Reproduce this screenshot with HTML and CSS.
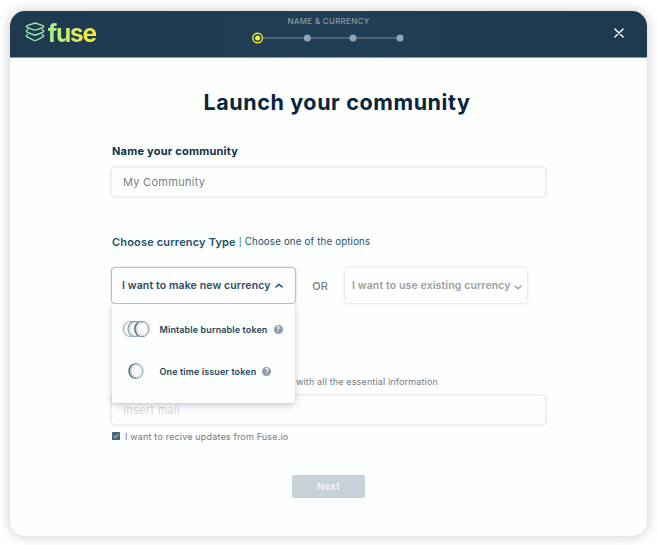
FILE: index.html
```html
<!DOCTYPE html>
<html lang="en">
<head>
<meta charset="utf-8">
<title>Launch your community</title>
<link rel="stylesheet" href="styles.css">
</head>
<body>
<main class="modal">
  <header class="header">
    <div class="logo">
      <svg class="logo-mark" width="20" height="20" viewBox="0 0 20 20" fill="none" stroke="url(#mark)" stroke-width="1.4" stroke-linejoin="round" stroke-linecap="round">
        <defs><linearGradient id="mark" gradientUnits="userSpaceOnUse" x1="0" y1="20" x2="20" y2="0"><stop offset="0" stop-color="#7be3b4"/><stop offset="1" stop-color="#a4ee9a"/></linearGradient></defs>
        <path d="M10 1 L17.9 3.7 Q19.6 4.6 17.9 5.5 L12.2 7.6 Q10 8.4 7.8 7.6 L2.1 5.5 Q.4 4.6 2.1 3.7 Z"/>
        <path d="M2.8 7.8 L2.1 8.2 Q.4 9.2 2.1 10.1 L7.8 12.5 Q10 13.4 12.2 12.5 L17.9 10.1 Q19.6 9.2 17.9 8.2 L17.2 7.8"/>
        <path d="M2.8 12.6 L2.1 13 Q.4 14 2.1 14.9 L7.8 17.8 Q10 19.4 12.2 17.8 L17.9 14.9 Q19.6 14 17.9 13 L17.2 12.6"/>
      </svg>
      <span class="logo-text">fuse</span>
    </div>
    <div class="progress">
      <div class="progress-label">NAME &amp; CURRENCY</div>
      <svg width="154" height="12" viewBox="0 0 154 12">
        <path d="M11 6H148" stroke="#566f83" stroke-width="1.6"/>
        <circle cx="5.6" cy="6" r="4.8" fill="none" stroke="#e9e432" stroke-width="1.4"/>
        <circle cx="5.6" cy="6" r="2.5" fill="#f6ee2e"/>
        <circle cx="55.3" cy="6" r="3.5" fill="#94a3b0"/>
        <circle cx="101" cy="6" r="3.5" fill="#94a3b0"/>
        <circle cx="148" cy="6" r="3.5" fill="#94a3b0"/>
      </svg>
    </div>
    <svg class="close" width="10" height="10" viewBox="0 0 10 10" stroke="#fff" stroke-width="1.4" stroke-linecap="round"><path d="M.9.9 9.1 9.1M9.1.9.9 9.1"/></svg>
  </header>
  <form class="form">
    <h1 class="title">Launch your community</h1>
    <div class="label name-label">Name your community</div>
    <div class="input name-input">My Community</div>
    <div class="label type-label"><span class="t-choose">Choose currency Type</span><span class="t-options"><span class="bar">|</span> Choose one of the options</span></div>
    <div class="choices">
      <div class="select active">
        <span>I want to make new currency</span>
        <svg width="8" height="5" viewBox="0 0 8 5" fill="none" stroke="#2c4b62" stroke-width="1.4" stroke-linecap="round"><path d="M.8 4 Q2.2 3 4 1.2 Q5.8 3 7.2 4"/></svg>
        <div class="menu">
          <div class="option">
            <svg class="coins" width="28" height="18" viewBox="0 0 28 18" fill="none">
              <ellipse cx="8" cy="9" rx="7" ry="7.6" stroke="#a3b8c6"/>
              <ellipse cx="9" cy="9" rx="6.5" ry="7.2" stroke="#b9c8d2" stroke-width=".8"/>
              <ellipse cx="13" cy="9" rx="7" ry="7.6" fill="#fff" stroke="#7f9bac" stroke-width="1.2"/>
              <ellipse cx="14.3" cy="9" rx="6.7" ry="7.4" stroke="#a8bbc7" stroke-width=".8"/>
              <ellipse cx="19.3" cy="9" rx="7.2" ry="8" fill="#486476"/>
              <ellipse cx="20.3" cy="9" rx="6.8" ry="7.7" fill="#fff" stroke="#6f8797" stroke-width=".8"/>
              <ellipse cx="20.3" cy="9" rx="5.5" ry="6.3" stroke="#708998" stroke-dasharray="1 1.3"/>
            </svg>
            <span>Mintable burnable token</span>
            <span class="help">?</span>
          </div>
          <div class="option">
            <svg class="coins" width="28" height="18" viewBox="0 0 28 18" fill="none">
              <ellipse cx="13.4" cy="9" rx="7.1" ry="7.7" fill="#486476"/>
              <ellipse cx="14.5" cy="9" rx="6.6" ry="7.3" fill="#fff" stroke="#8195a3" stroke-width=".8"/>
              <ellipse cx="14.5" cy="9" rx="5.3" ry="6" stroke="#708998" stroke-dasharray="1 1.3"/>
            </svg>
            <span>One time issuer token</span>
            <span class="help">?</span>
          </div>
        </div>
      </div>
      <span class="or">OR</span>
      <div class="select muted">
        <span>I want to use existing currency</span>
        <svg class="down" width="8" height="5" viewBox="0 0 8 5" fill="none" stroke="#9b9fa1" stroke-width="1.4" stroke-linecap="round"><path d="M.8 1 Q2.2 2 4 3.8 Q5.8 2 7.2 1"/></svg>
      </div>
    </div>
    <div class="hint">with all the essential information</div>
    <div class="input mail">Insert mail</div>
    <div class="updates">
      <svg width="8" height="8" viewBox="0 0 8 8"><rect width="8" height="8" rx=".6" fill="#47657b"/><path d="M1.6 4.2 3.2 5.7 6.5 2.3" fill="none" stroke="#dce5ea" stroke-width=".9"/></svg>
      <span>I want to recive updates from Fuse.io</span>
    </div>
    <button class="next" type="button">Next</button>
  </form>
</main>
</body>
</html>
```

FILE: styles.css
```css
* { box-sizing: border-box; }
body { margin: 0; padding: 11px 10px 9px; height: 545px; overflow: hidden; background: #fff; font-family: Inter, "Open Sans", sans-serif; }
.modal { width: 637px; height: 525px; border-radius: 15px; background: #fdfefe; box-shadow: 0 0 13px rgba(0,0,0,.22); }
.header { height: 47px; display: flex; border-bottom: 1px solid #8795a8; border-radius: 15px 15px 0 0; background: linear-gradient(90deg, #1f394f, #203e55 50%, #1f394f); }
.logo { display: flex; width: 242px; padding: 11px 0 0 15px; }
.logo-text { margin: -3px 0 0 2.5px; height: 28px; font-size: 24.5px; line-height: 28px; font-weight: 700; letter-spacing: -1.2px; padding-right: 2px; background: linear-gradient(90deg, #a9ef8d, #d9ec61 55%, #f8e634); -webkit-background-clip: text; background-clip: text; color: transparent; }
.progress { width: 154px; }
.progress svg { display: block; }
.progress-label { height: 21px; padding: 4px 1px 0 0; font-size: 7.9px; line-height: 12px; letter-spacing: .35px; color: #8b9baa; text-align: center; white-space: nowrap; font-weight: 500; }
.close { margin: 17px 0 0 208px; }
.form { padding: 0 102px; white-space: nowrap; }
.title { margin: 0 0 0 17px; padding-top: 28px; height: 79px; text-align: center; font-size: 21.5px; line-height: 32px; font-weight: 700; color: #06263f; letter-spacing: .6px; }
.label { display: flex; align-items: center; height: 28px; font-size: 11px; line-height: 16px; }
.name-label { color: #0e304a; font-weight: 700; letter-spacing: .22px; }
.input { display: flex; align-items: center; width: 435px; height: 30px; margin-left: -1px; padding-left: 11px; border: 1px solid #e9edef; border-radius: 4px; box-shadow: 0 0 3px rgba(80,100,115,.2); color: #7b7e80; font-size: 11px; letter-spacing: .28px; background: #fdfefe; }
.name-input { margin-top: 2px; }
.type-label { margin-top: 31px; color: #1f506f; }
.t-choose { font-weight: 600; margin-right: 3px; letter-spacing: .17px; }
.t-options { font-size: 9.7px; letter-spacing: .18px; }
.bar { font-size: 8.5px; }
.choices { display: flex; align-items: center; height: 37px; margin: 11px 0 0 -1px; }
.select { position: relative; display: flex; align-items: center; justify-content: space-between; width: 185px; height: 37px; border: 1px solid #a5c4d7; border-radius: 4px; padding: 0 12px 0 10px; font-size: 10.5px; letter-spacing: .12px; background: #fdfefe; color: #2c4b62; font-weight: 600; box-shadow: 0 0 2px #aecbdc; }
.select.muted { width: 184px; border-color: #ebeef0; padding: 0 5px 0 7px; color: #9b9fa1; box-shadow: 0 0 3px #e5eaed; }
.down { margin-top: 3px; }
.or { width: 48px; text-align: center; font-size: 11px; color: #7b7e80; font-weight: 500; }
.menu { position: absolute; z-index: 2; top: 36px; left: 0; width: 183px; height: 99px; padding-top: 4px; border-radius: 0 0 4px 4px; background: #fdfefe; box-shadow: 0 2px 6px rgba(60,80,95,.3); clip-path: inset(0 -8px -10px -8px); }
.option { display: flex; align-items: center; height: 42px; padding-left: 10px; font-size: 9px; letter-spacing: .11px; color: #25455c; }
.coins { margin-right: 9.5px; }
.help { width: 9px; height: 9px; margin-left: 6px; border-radius: 50%; background: #8e9dab; color: #fff; font-size: 7px; line-height: 9px; letter-spacing: 0; text-align: center; }
.hint { height: 20px; margin-top: 68px; padding-left: 184px; font-size: 9px; line-height: 20px; letter-spacing: .15px; color: #777c7e; }
.mail { margin-top: 3px; color: #d3d7d9; }
.updates { display: flex; align-items: center; height: 22px; margin-top: 0; font-size: 9px; letter-spacing: .17px; gap: 5px; color: #75797b; }
.next { display: block; width: 73px; height: 23px; margin: 28px 0 0 180px; padding: 0; border: 0; border-radius: 2px; background: #c7d1d8; color: #f5f8fa; font: 600 9.5px/23px Inter, sans-serif; letter-spacing: .4px; }
```
